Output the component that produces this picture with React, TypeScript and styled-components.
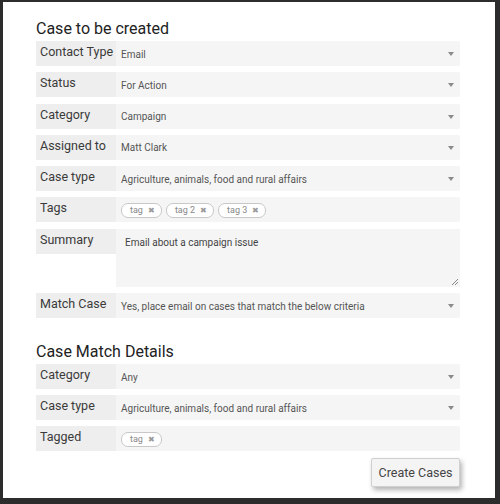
import React from "react";
import styled, { createGlobalStyle } from "styled-components";

const GlobalStyle = createGlobalStyle`
  html, body {
    margin: 0;
    padding: 0;
    background: #2c2c2c;
    font-family: Roboto, "Liberation Sans", sans-serif;
  }
`;

const Backdrop = styled.div`
  width: 500px;
  height: 504px;
  padding: 2px 5px 6px 3px;
  box-sizing: border-box;
  background: #2c2c2c;
`;

const Modal = styled.div`
  width: 492px;
  height: 496px;
  box-sizing: border-box;
  background: #fff;
  padding: 14px 35px 0 33px;
  display: flex;
  flex-direction: column;
`;

const SectionTitle = styled.h2<{ $top?: number }>`
  margin: ${(p) => p.$top ?? 0}px 0 0 0;
  font-size: 16px;
  font-weight: 400;
  color: #222;
  line-height: 25px;
`;

const Rows = styled.div<{ $gap?: number }>`
  display: flex;
  flex-direction: column;
  gap: ${(p) => p.$gap ?? 6}px;
`;

const Row = styled.div<{ $height?: number }>`
  display: grid;
  grid-template-columns: 80px 1fr;
  height: ${(p) => p.$height ?? 25}px;
`;

const Label = styled.div`
  background: #eeeeee;
  height: 25px;
  box-sizing: border-box;
  padding: 3px 0 0 4px;
  font-size: 12.5px;
  color: #3a3a3a;
  line-height: 16px;
  white-space: nowrap;
`;

const Value = styled.div`
  background: #f5f5f5;
  border-radius: 0 2px 2px 0;
  display: flex;
  align-items: center;
  padding: 1px 6px 0 5px;
  font-size: 10px;
  color: #555;
`;

const Caret = styled.span`
  margin-left: auto;
  width: 0;
  height: 0;
  border-left: 3.5px solid transparent;
  border-right: 3.5px solid transparent;
  border-top: 4.5px solid #8a8a8a;
`;

const TagList = styled.div`
  display: flex;
  gap: 4px;
`;

const Tag = styled.span`
  display: inline-flex;
  align-items: center;
  gap: 5px;
  height: 13px;
  padding: 0 6px 0 8px;
  border: 1px solid #c8c8c8;
  border-radius: 7px;
  background: #fff;
  font-size: 9px;
  color: #888;
`;

const TagClose = styled.span`
  font-size: 7.5px;
  color: #999;
`;

const SummaryBox = styled.div`
  background: #f5f5f5;
  position: relative;
  padding: 8px 9px;
  font-size: 10px;
  color: #444;
`;

const Grip = styled.svg`
  position: absolute;
  right: 1px;
  bottom: 1px;
`;

const Footer = styled.div`
  display: flex;
  justify-content: flex-end;
  margin-top: 7px;
`;

const Button = styled.button`
  width: 89px;
  height: 29px;
  background: #f4f4f4;
  border: 1px solid #d0d0d0;
  border-radius: 2px;
  box-shadow: 2px 3px 5px rgba(0, 0, 0, 0.3);
  font-family: Roboto, "Liberation Sans", sans-serif;
  font-size: 12.5px;
  color: #444;
  padding: 0;
`;

const SelectRow = ({ label, value }: { label: string; value: string }) => (
  <Row>
    <Label>{label}</Label>
    <Value>
      {value}
      <Caret />
    </Value>
  </Row>
);

const TagsRow = ({ label, tags }: { label: string; tags: string[] }) => (
  <Row>
    <Label>{label}</Label>
    <Value>
      <TagList>
        {tags.map((t) => (
          <Tag key={t}>
            {t}
            <TagClose>✖</TagClose>
          </Tag>
        ))}
      </TagList>
    </Value>
  </Row>
);

const App = () => {
  return (
    <>
      <GlobalStyle />
      <Backdrop>
        <Modal>
          <SectionTitle>Case to be created</SectionTitle>
          <Rows $gap={6.3}>
            <SelectRow label="Contact Type" value="Email" />
            <SelectRow label="Status" value="For Action" />
            <SelectRow label="Category" value="Campaign" />
            <SelectRow label="Assigned to" value="Matt Clark" />
            <SelectRow
              label="Case type"
              value="Agriculture, animals, food and rural affairs"
            />
            <TagsRow label="Tags" tags={["tag", "tag 2", "tag 3"]} />
            <Row $height={58}>
              <Label>Summary</Label>
              <SummaryBox>
                Email about a campaign issue
                <Grip width="9" height="9" viewBox="0 0 9 9">
                  <path d="M8 2 L2 8 M8 5 L5 8" stroke="#888" strokeWidth="1" />
                </Grip>
              </SummaryBox>
            </Row>
            <SelectRow
              label="Match Case"
              value="Yes, place email on cases that match the below criteria"
            />
          </Rows>
          <SectionTitle $top={21}>Case Match Details</SectionTitle>
          <Rows>
            <SelectRow label="Category" value="Any" />
            <SelectRow
              label="Case type"
              value="Agriculture, animals, food and rural affairs"
            />
            <TagsRow label="Tagged" tags={["tag"]} />
          </Rows>
          <Footer>
            <Button>Create Cases</Button>
          </Footer>
        </Modal>
      </Backdrop>
    </>
  );
};

export default App;
